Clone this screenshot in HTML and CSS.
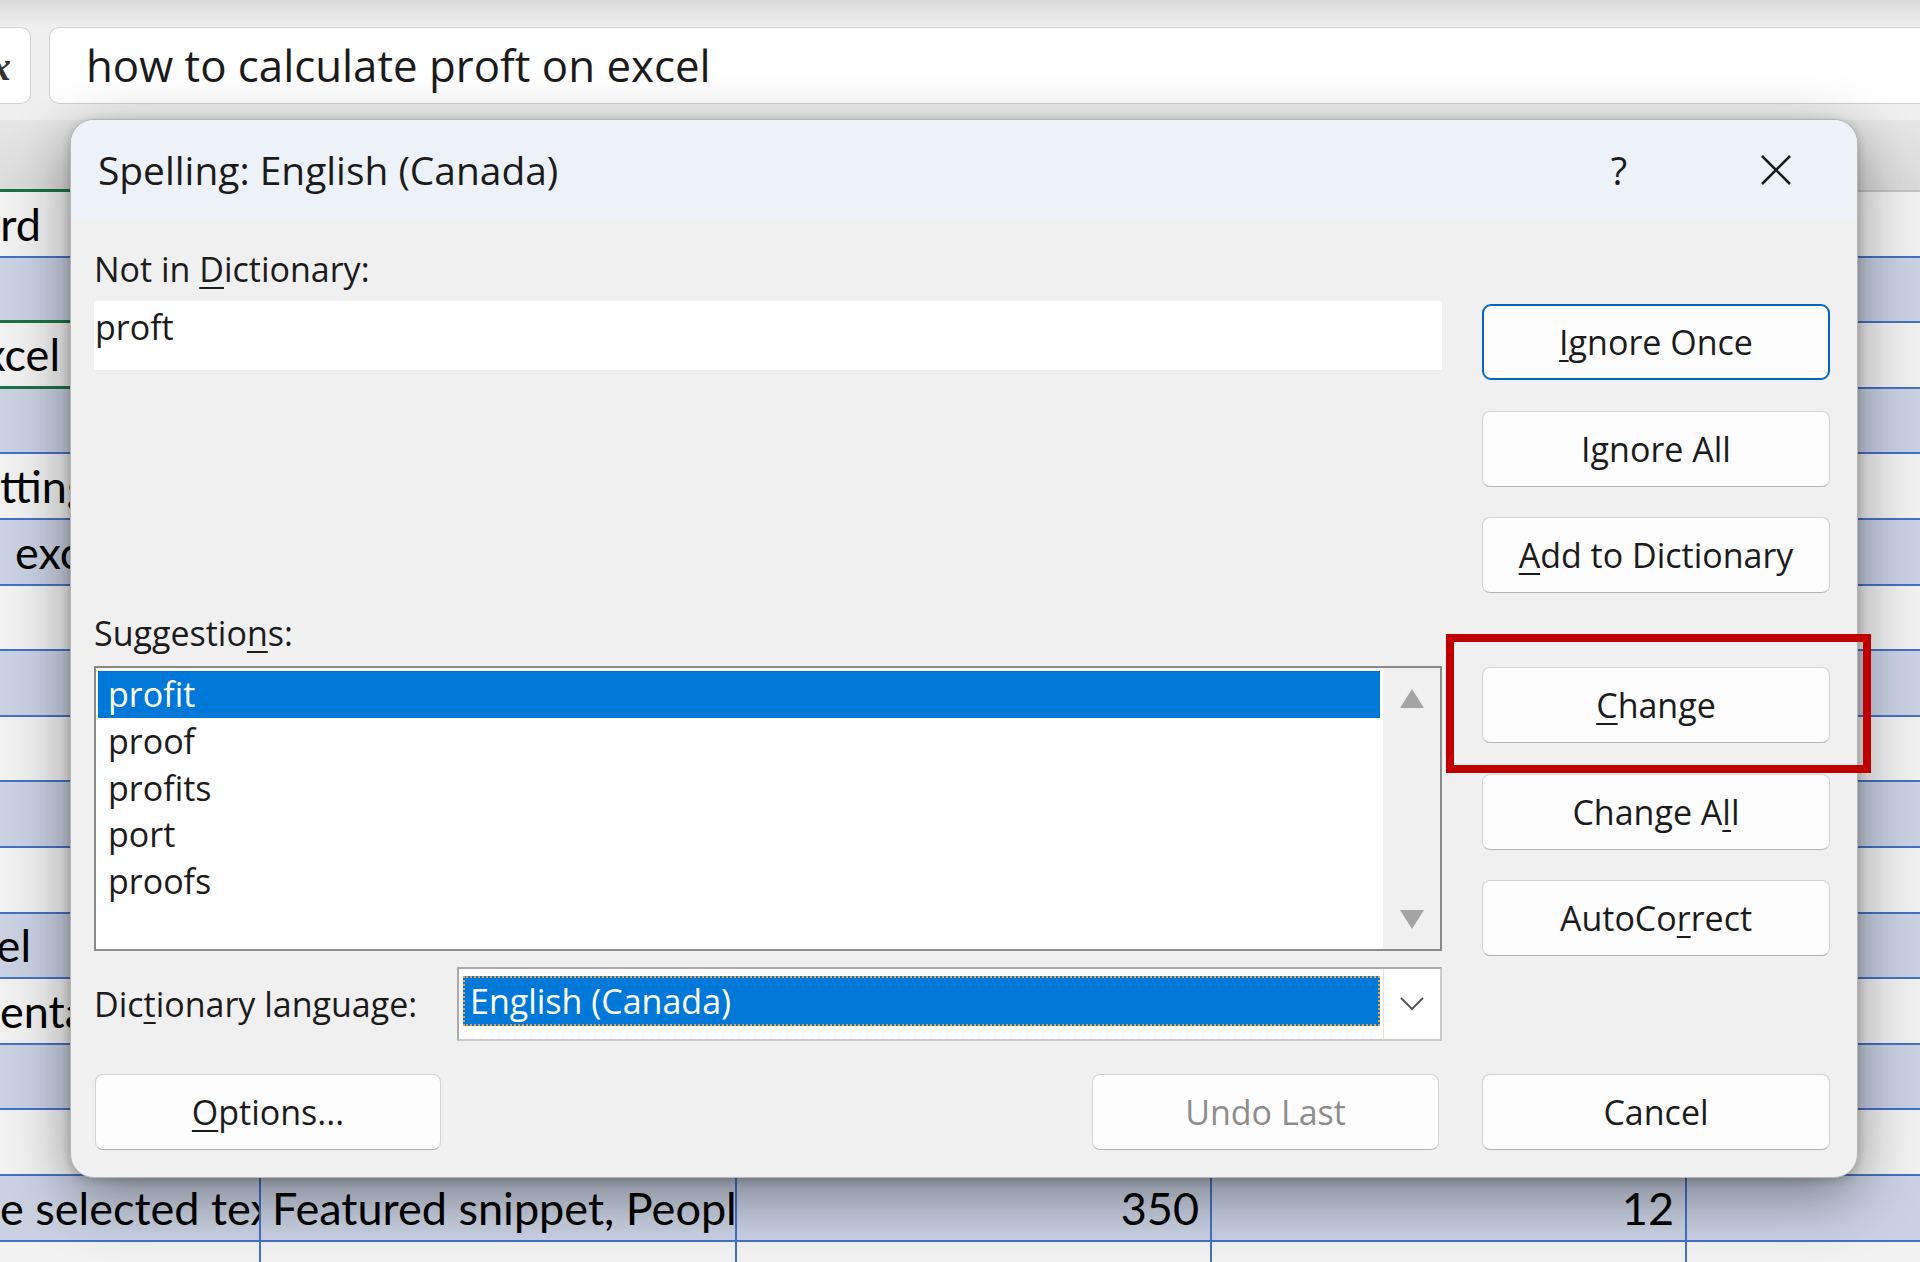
FILE: index.html
```html
<!DOCTYPE html>
<html lang="en">
<head>
  <meta charset="UTF-8" />
  <meta name="viewport" content="width=device-width, initial-scale=1.0" />
  <title>Spelling: English (Canada)</title>
  <link rel="stylesheet" href="styles.css">
</head>
<body>
  <div class="screen">
    <div class="formula-bar">
      <div class="fx-box"><span class="fx">fx</span></div>
      <div class="formula-input">how to calculate proft on excel</div>
    </div>

    <!-- Tabelle im Hintergrund -->
    <div class="sheet">
      <div class="row header">
        <div class="cell a sel-edge"></div><div class="cell b"></div><div class="cell c"></div><div class="cell d"></div><div class="cell e"></div>
      </div>
      <div class="row light">
        <div class="cell a tail tail-keyword">keyword</div><div class="cell b"></div><div class="cell c"></div><div class="cell d"></div><div class="cell e"></div>
      </div>
      <div class="row blue">
        <div class="cell a sel-edge"></div><div class="cell b"></div><div class="cell c"></div><div class="cell d"></div><div class="cell e"></div>
      </div>
      <div class="row light">
        <div class="cell a tail tail-excel sel-edge">excel</div><div class="cell b"></div><div class="cell c"></div><div class="cell d"></div><div class="cell e"></div>
      </div>
      <div class="row blue">
        <div class="cell a"></div><div class="cell b"></div><div class="cell c"></div><div class="cell d"></div><div class="cell e"></div>
      </div>
      <div class="row light">
        <div class="cell a">tting in excel</div><div class="cell b"></div><div class="cell c"></div><div class="cell d"></div><div class="cell e"></div>
      </div>
      <div class="row blue">
        <div class="cell a lead-exc">excel sheet</div><div class="cell b"></div><div class="cell c"></div><div class="cell d"></div><div class="cell e"></div>
      </div>
      <div class="row light">
        <div class="cell a"></div><div class="cell b"></div><div class="cell c"></div><div class="cell d"></div><div class="cell e"></div>
      </div>
      <div class="row blue">
        <div class="cell a"></div><div class="cell b"></div><div class="cell c"></div><div class="cell d"></div><div class="cell e"></div>
      </div>
      <div class="row light">
        <div class="cell a"></div><div class="cell b"></div><div class="cell c"></div><div class="cell d"></div><div class="cell e"></div>
      </div>
      <div class="row blue">
        <div class="cell a"></div><div class="cell b"></div><div class="cell c"></div><div class="cell d"></div><div class="cell e"></div>
      </div>
      <div class="row light">
        <div class="cell a"></div><div class="cell b"></div><div class="cell c"></div><div class="cell d"></div><div class="cell e"></div>
      </div>
      <div class="row blue">
        <div class="cell a tail tail-el">excel</div><div class="cell b"></div><div class="cell c"></div><div class="cell d"></div><div class="cell e"></div>
      </div>
      <div class="row light">
        <div class="cell a">entage</div><div class="cell b"></div><div class="cell c"></div><div class="cell d"></div><div class="cell e"></div>
      </div>
      <div class="row blue">
        <div class="cell a"></div><div class="cell b"></div><div class="cell c"></div><div class="cell d"></div><div class="cell e"></div>
      </div>
      <div class="row light">
        <div class="cell a"></div><div class="cell b"></div><div class="cell c"></div><div class="cell d"></div><div class="cell e"></div>
      </div>
      <div class="row blue">
        <div class="cell a">e selected text</div><div class="cell b text">Featured snippet, People also ask</div><div class="cell c num">350</div><div class="cell d num">12</div><div class="cell e"></div>
      </div>
      <div class="row light">
        <div class="cell a"></div><div class="cell b"></div><div class="cell c"></div><div class="cell d"></div><div class="cell e"></div>
      </div>
    </div>

    <!-- Rechtschreib-Dialog -->
    <div class="dialog">
      <div class="dialog-title">
        <span class="title-text">Spelling: English (Canada)</span>
        <span class="title-help">?</span>
        <span class="title-close">
          <svg width="34" height="34" viewBox="0 0 34 34"><path d="M3 3 L31 31 M31 3 L3 31" stroke="#1b1b1b" stroke-width="2.6" fill="none"/></svg>
        </span>
      </div>

      <div class="dialog-body">
        <div class="main-col">
          <div class="label">Not in <u>D</u>ictionary:</div>
          <div class="word-box">proft</div>

          <div class="label suggestions-label">Suggestio<u>n</u>s:</div>
          <div class="listbox">
            <ul class="list-items">
              <li class="selected">profit</li>
              <li>proof</li>
              <li>profits</li>
              <li>port</li>
              <li>proofs</li>
            </ul>
            <div class="scrollbar">
              <span class="arrow up"></span>
              <span class="arrow down"></span>
            </div>
          </div>

          <div class="lang-row">
            <span class="label lang-label">Dic<u>t</u>ionary language:</span>
            <div class="dropdown">
              <div class="dropdown-value">English (Canada)</div>
              <div class="dropdown-button">
                <svg width="26" height="16" viewBox="0 0 26 16"><polyline points="2,2 13,13 24,2" stroke="#505050" stroke-width="1.8" fill="none"/></svg>
              </div>
            </div>
          </div>
        </div>

        <div class="side-col">
          <button class="btn focused"><u>I</u>gnore Once</button>
          <button class="btn">I<u>g</u>nore All</button>
          <button class="btn"><u>A</u>dd to Dictionary</button>
          <button class="btn change"><u>C</u>hange</button>
          <button class="btn">Change A<u>l</u>l</button>
          <button class="btn">AutoCo<u>r</u>rect</button>
        </div>

        <div class="footer-left">
          <button class="btn options"><u>O</u>ptions...</button>
          <button class="btn undo disabled">Undo Last</button>
        </div>
        <div class="footer-right">
          <button class="btn">Cancel</button>
        </div>
      </div>
    </div>

    <div class="callout"></div>
  </div>
</body>
</html>
```

FILE: styles.css
```css
body {
  margin: 0;
  font-family: 'Open Sans', 'Noto Sans', sans-serif;
  color: #1b1b1b;
  background-color: #f0f0f0;
}

.screen {
  position: relative;
  width: 1920px;
  height: 1262px;
  overflow: hidden;
}

/* Bearbeitungsleiste oben */
.formula-bar {
  height: 120px;
  box-sizing: border-box;
  padding-top: 27px;
  display: flex;
  align-items: flex-start;
  background: linear-gradient(#d8d8d8 0, #e9e9e9 18px, #efefef 27px, #efefef 100%);
}

.fx-box {
  width: 31px;
  height: 77px;
  box-sizing: border-box;
  padding-right: 19px;
  background: #fff;
  border: 1px solid #d2d2d2;
  border-left: none;
  border-radius: 0 10px 10px 0;
  display: flex;
  justify-content: flex-end;
  align-items: center;
  overflow: hidden;
}

.fx {
  font-family: 'Liberation Serif', serif;
  font-style: italic;
  font-weight: bold;
  font-size: 42px;
  color: #333;
  white-space: nowrap;
}

.formula-input {
  flex: 1;
  margin-left: 18px;
  height: 77px;
  box-sizing: border-box;
  padding-left: 36px;
  background: #fff;
  border: 1px solid #d2d2d2;
  border-right: none;
  border-radius: 10px 0 0 10px;
  font-size: 43.8px;
  line-height: 75px;
  white-space: nowrap;
}

/* Tabelle */
.sheet {
  font-family: 'Lato', sans-serif;
  font-size: 45px;
  color: #000;
}

.row {
  display: flex;
  height: 65.6px;
}

.row.header {
  height: 72px;
  background: linear-gradient(#e6e6e6, #dadada);
}

.row.light {
  background-color: #f1f1f1;
}

.row.blue {
  background-color: #c9d1e3;
}

.cell {
  box-sizing: border-box;
  height: 100%;
  border-bottom: 2px solid #4472c4;
  border-right: 2px solid #4472c4;
  display: flex;
  align-items: center;
  white-space: nowrap;
  overflow: hidden;
}

.row.header .cell {
  border-bottom-color: #c4c4c4;
  border-right-color: #cfcfcf;
}

.cell.a { width: 261px; }
.cell.b { width: 476px; }
.cell.c { width: 475px; }
.cell.d { width: 475px; }
.cell.e { flex: 1; border-right: none; }

.cell.tail {
  justify-content: flex-end;
}

.tail-keyword { padding-right: 218px; }
.tail-excel { padding-right: 199px; }
.tail-el { padding-right: 228px; }
.lead-exc { padding-left: 15px; }

.row .cell.sel-edge {
  border-bottom: 3px solid #1e7145;
}

.cell.text {
  padding-left: 11px;
}

.cell.num {
  justify-content: flex-end;
  padding-right: 11px;
}

/* Dialog */
.dialog {
  position: absolute;
  left: 70px;
  top: 119px;
  width: 1788px;
  height: 1059px;
  box-sizing: border-box;
  background-color: #f0f0f0;
  border: 1px solid #b6b6b6;
  border-radius: 24px;
  overflow: hidden;
  box-shadow: 0 18px 60px rgba(0,0,0,0.42), 0 2px 10px rgba(0,0,0,0.2);
}

.dialog-title {
  height: 99px;
  padding-left: 27px;
  background-color: #edf2f9;
  display: flex;
  align-items: center;
}

.title-text {
  flex: 1;
  font-size: 38.9px;
}

.title-help {
  width: 60px;
  text-align: center;
  font-size: 38px;
}

.title-close {
  width: 90px;
  margin-left: 82px;
  margin-right: 36px;
  display: flex;
  justify-content: center;
}

.dialog-body {
  display: grid;
  grid-template-columns: 1348px 348px;
  column-gap: 40px;
  padding: 0 27px 0 23px;
}

u {
  text-decoration-thickness: 2px;
  text-underline-offset: 5px;
}

.main-col {
  padding-top: 27px;
  display: flex;
  flex-direction: column;
}

.label {
  font-size: 34px;
  line-height: 46px;
  white-space: nowrap;
}

.word-box {
  margin-top: 9px;
  height: 69px;
  box-sizing: border-box;
  padding: 3px 0 0 1px;
  background: #fff;
  font-size: 34px;
  line-height: 46px;
}

.suggestions-label {
  margin-top: 240px;
}

.listbox {
  margin-top: 10px;
  height: 285px;
  box-sizing: border-box;
  border: 2px solid #8a8a8a;
  background: #fff;
  display: flex;
}

.list-items {
  flex: 1;
  list-style: none;
  margin: 0;
  padding: 3px 3px 0 2px;
}

.list-items li {
  height: 46.75px;
  box-sizing: border-box;
  padding: 1px 0 0 10px;
  font-size: 34px;
  line-height: 44px;
}

.list-items li.selected {
  background-color: #0078d7;
  color: #fff;
}

.scrollbar {
  width: 57px;
  box-sizing: border-box;
  padding: 21px 0 20px;
  background-color: #f0f0f0;
  display: flex;
  flex-direction: column;
  justify-content: space-between;
  align-items: center;
}

.arrow {
  width: 0;
  height: 0;
  border-left: 12px solid transparent;
  border-right: 12px solid transparent;
}

.arrow.up { border-bottom: 19px solid #a3a3a3; }
.arrow.down { border-top: 19px solid #a3a3a3; }

.lang-row {
  margin-top: 16px;
  height: 74px;
  display: flex;
  align-items: center;
}

.lang-label {
  width: 363px;
}

.dropdown {
  flex: 1;
  height: 74px;
  box-sizing: border-box;
  border: 2px solid #a9a9a9;
  border-right-color: #cacaca;
  border-bottom-color: #cacaca;
  background: #fff;
  display: flex;
}

.dropdown-value {
  width: 917px;
  box-sizing: border-box;
  margin: 7px 0 13px 4px;
  padding: 3px 0 0 5px;
  background-color: #0078d7;
  border: 2px dotted #f1a04a;
  color: #fff;
  font-size: 34px;
  line-height: 40px;
  white-space: nowrap;
}

.dropdown-button {
  margin-left: auto;
  width: 56px;
  border-left: 1px solid #e2e2e2;
  display: flex;
  align-items: center;
  justify-content: center;
}

.side-col {
  padding-top: 85px;
  display: flex;
  flex-direction: column;
  gap: 30.5px;
}

.btn {
  width: 348px;
  height: 76px;
  box-sizing: border-box;
  padding: 0;
  background-color: #fdfdfd;
  border: 1px solid #d3d3d3;
  border-bottom-color: #b3b3b3;
  border-radius: 8px;
  font-family: 'Open Sans', 'Noto Sans', sans-serif;
  font-size: 34px;
  color: #1b1b1b;
}

.btn.focused {
  border: 2px solid #0067c0;
  border-radius: 9px;
}

.btn.change {
  margin-top: 43.5px;
}

.btn.disabled {
  color: #8d8d8d;
}

.footer-left {
  margin-top: 33px;
  display: flex;
  justify-content: space-between;
}

.btn.options {
  width: 346px;
  margin-left: 1px;
}

.btn.undo {
  width: 347px;
  margin-right: 3px;
}

.footer-right {
  margin-top: 33px;
}

/* rote Markierung um "Change" */
.callout {
  position: absolute;
  left: 1446px;
  top: 634px;
  width: 425px;
  height: 139px;
  box-sizing: border-box;
  border: 8px solid #c00000;
}
```
